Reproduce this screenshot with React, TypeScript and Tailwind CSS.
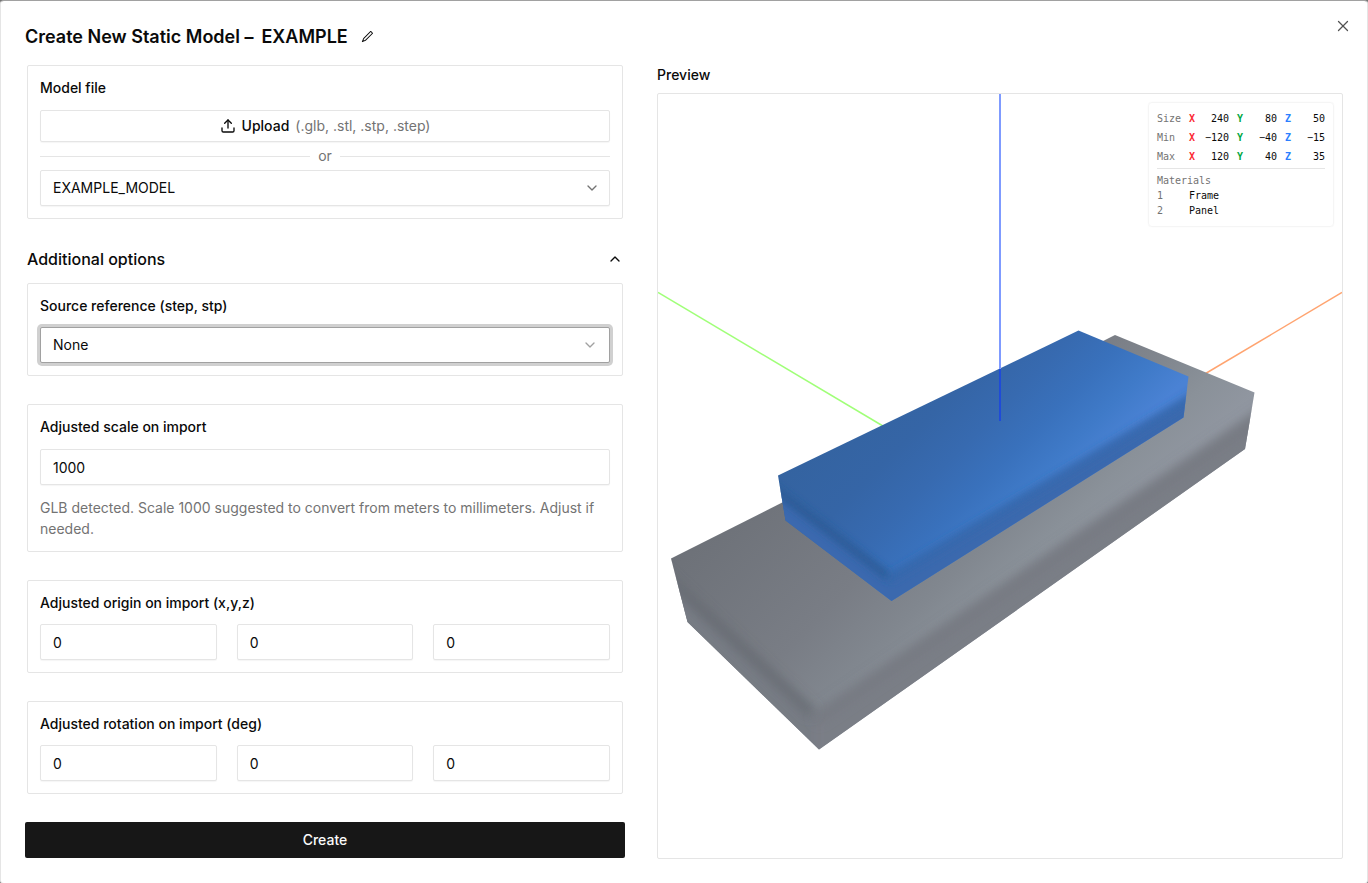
import React, { useState } from "react";
import { ChevronDown, ChevronUp, Upload, X } from "lucide-react";
import { RxPencil1 } from "react-icons/rx";

interface Bounds {
	label: string;
	x: string;
	y: string;
	z: string;
}

const BOUNDS: Bounds[] = [
	{ label: "Size", x: "240", y: "80", z: "50" },
	{ label: "Min", x: "−120", y: "−40", z: "−15" },
	{ label: "Max", x: "120", y: "40", z: "35" },
];

const MATERIALS = ["Frame", "Panel"];
const AXES = ["x", "y", "z"];

const fieldClass =
	"h-9 w-full rounded-xs border border-neutral-200 bg-white px-3 text-sm text-neutral-950 shadow-[0_1px_1px_rgba(0,0,0,0.04)] outline-none";

const Card = ({ children }: { children: React.ReactNode }) => (
	<section className="rounded-xs border border-neutral-200 p-3">
		{children}
	</section>
);

const VectorCard = ({ title, name }: { title: string; name: string }) => {
	const [values, setValues] = useState(["0", "0", "0"]);

	return (
		<Card>
			<fieldset>
				<legend className="text-sm leading-5 font-medium">{title}</legend>
				<div className="mt-[11px] grid grid-cols-3 gap-5">
					{AXES.map((axis, i) => (
						<input
							key={axis}
							aria-label={`${name} ${axis}`}
							className={fieldClass}
							value={values[i]}
							onChange={(e) =>
								setValues(values.map((v, j) => (j === i ? e.target.value : v)))
							}
						/>
					))}
				</div>
			</fieldset>
		</Card>
	);
};

const AxisValue = ({
	axis,
	value,
	color,
}: {
	axis: string;
	value: string;
	color: string;
}) => (
	<td className="pb-1 pl-2">
		<div className="flex w-10 justify-between">
			<span className={`font-bold ${color}`}>{axis}</span>
			<span>{value}</span>
		</div>
	</td>
);

const ModelInfo = () => (
	<div className="absolute top-2 right-2 rounded-sm border border-neutral-100 bg-white/90 p-2 font-['DejaVu_Sans_Mono',monospace] text-[10px] leading-[15px] shadow-[0_0_1px_rgba(0,0,0,0.08)]">
		<table className="border-collapse">
			<tbody>
				{BOUNDS.map((b) => (
					<tr key={b.label}>
						<th
							scope="row"
							className="w-6 pb-1 text-left font-normal text-neutral-500"
						>
							{b.label}
						</th>
						<AxisValue axis="X" value={b.x} color="text-red-500" />
						<AxisValue axis="Y" value={b.y} color="text-green-600" />
						<AxisValue axis="Z" value={b.z} color="text-blue-500" />
					</tr>
				))}
			</tbody>
		</table>
		<div className="border-t border-neutral-200 pt-1">
			<div className="text-neutral-500">Materials</div>
			<ol>
				{MATERIALS.map((name, i) => (
					<li key={name} className="flex">
						<span className="w-8 text-neutral-500">{i + 1}</span>
						<span>{name}</span>
					</li>
				))}
			</ol>
		</div>
	</div>
);

const ModelScene = () => (
	<svg
		className="h-0 w-full flex-1"
		viewBox="0 0 684 764"
		preserveAspectRatio="xMidYMid slice"
		role="img"
		aria-label="Model preview"
	>
		<defs>
			<linearGradient id="frameTop" gradientUnits="userSpaceOnUse" x1="238" y1="238" x2="448" y2="448">
				<stop offset="0" stopColor="#6d7178" />
				<stop offset="0.5" stopColor="#797d85" />
				<stop offset="0.71" stopColor="#81878f" />
				<stop offset="0.86" stopColor="#8a9199" />
				<stop offset="1" stopColor="#9096a0" />
			</linearGradient>
			<linearGradient id="panelTop" gradientUnits="userSpaceOnUse" x1="251" y1="251" x2="406" y2="406">
				<stop offset="0" stopColor="#3463a0" />
				<stop offset="0.3" stopColor="#3565a6" />
				<stop offset="0.5" stopColor="#376ab0" />
				<stop offset="0.68" stopColor="#3971bc" />
				<stop offset="0.84" stopColor="#3f7ac8" />
				<stop offset="1" stopColor="#4a82d4" />
			</linearGradient>
			<clipPath id="frameClip">
				<path d="M13 464.5 457 241l139.500 57.500L587 355 161 655.500 29.500 528Z" />
			</clipPath>
			<clipPath id="panelClip">
				<path d="M120 381.500 420.500 236.500l110 46-5 41L233.500 507l-106-80.500Z" />
			</clipPath>
			<filter id="blurWide" x="-20%" y="-20%" width="140%" height="140%">
				<feGaussianBlur stdDeviation="6" />
			</filter>
			<filter id="blurNarrow" x="-20%" y="-20%" width="140%" height="140%">
				<feGaussianBlur stdDeviation="4" />
			</filter>
		</defs>

		<path d="M0 198.500 230 335" stroke="#a0ff78" strokeWidth="1.500" />
		<path d="M684 198.500 540 284" stroke="#ffa470" strokeWidth="1.500" />

		<g clipPath="url(#frameClip)">
			<rect width="684" height="764" fill="url(#frameTop)" />
			<g filter="url(#blurWide)">
				<path d="M-20 456 155 620l6 90L-20 560Z" fill="#777b84" />
				<path d="M155 620 640 290v120L161 720Z" fill="#7a7e86" />
			</g>
			<path d="M-10 466 155 620" stroke="#63676e" strokeWidth="8" filter="url(#blurWide)" />
			<path d="M158 626 640 298" stroke="#747880" strokeWidth="8" filter="url(#blurWide)" />
		</g>

		<g clipPath="url(#panelClip)">
			<rect width="684" height="764" fill="url(#panelTop)" />
			<g filter="url(#blurNarrow)">
				<path d="M90 376 231 483l4 60L90 440Z" fill="#3a69af" />
				<path d="M231 483 570 280v80L233 540Z" fill="#3b69ae" />
			</g>
			<path d="M100 383 231 483" stroke="#28568f" strokeWidth="6" filter="url(#blurNarrow)" />
			<path d="M231 485 570 282" stroke="#3365a8" strokeWidth="5" filter="url(#blurNarrow)" />
		</g>

		<path d="M342 0V275" stroke="#7f9bff" strokeWidth="2" />
		<path d="M342 275V327" stroke="#1f4bd8" strokeWidth="2" />
	</svg>
);

const App: React.FC = () => {
	const [model, setModel] = useState("EXAMPLE_MODEL");
	const [source, setSource] = useState("None");
	const [scale, setScale] = useState("1000");
	const [open, setOpen] = useState(true);

	return (
		<div className="flex min-h-screen bg-neutral-500 font-[Inter,sans-serif] text-neutral-950">
			<div
				role="dialog"
				aria-labelledby="title"
				className="relative flex flex-1 flex-col gap-4 rounded border border-neutral-200 border-t-neutral-400 bg-white p-6"
			>
				<header className="flex h-6 items-center">
					<h1 id="title" className="text-lg leading-6 font-semibold">
						Create New Static Model –
						<span className="ml-2">EXAMPLE</span>
					</h1>
					<button type="button" aria-label="Rename" className="ml-3">
						<RxPencil1 className="size-3.5" />
					</button>
				</header>

				<button
					type="button"
					aria-label="Close"
					className="absolute top-4 right-[15px] opacity-70"
				>
					<X className="size-[18px]" strokeWidth={1.75} />
				</button>

				<div className="flex flex-1 gap-8">
					<form
						className="flex w-[600px] shrink-0 flex-col gap-7"
						onSubmit={(e) => e.preventDefault()}
					>
						<div className="flex flex-col gap-7 px-0.5">
							<Card>
								<h2 className="text-sm leading-5 font-medium">Model file</h2>
								<button
									type="button"
									className="mt-3 flex h-8 w-full items-center justify-center gap-1.5 rounded-xs border border-neutral-200 text-sm font-medium shadow-[0_1px_1px_rgba(0,0,0,0.04)]"
								>
									<Upload className="size-4" />
									Upload
									<span className="font-normal text-neutral-500">
										(.glb, .stl, .stp, .step)
									</span>
								</button>
								<div className="flex h-7 items-center gap-2 text-sm text-neutral-500">
									<div className="h-px flex-1 bg-neutral-200" />
									or
									<div className="h-px flex-1 bg-neutral-200" />
								</div>
								<div className="relative">
									<select
										aria-label="Model"
										className={`appearance-none ${fieldClass}`}
										value={model}
										onChange={(e) => setModel(e.target.value)}
									>
										<option>EXAMPLE_MODEL</option>
									</select>
									<ChevronDown className="pointer-events-none absolute top-2.5 right-2.5 size-4 text-neutral-500" />
								</div>
							</Card>

							<div className="flex flex-col gap-3">
								<button
									type="button"
									aria-expanded={open}
									className="flex items-center justify-between text-base font-medium"
									onClick={() => setOpen(!open)}
								>
									Additional options
									<ChevronUp className="size-4" />
								</button>
								{open && (
									<div className="flex flex-col gap-7">
										<Card>
											<label
												htmlFor="source"
												className="block text-sm leading-5 font-medium"
											>
												Source reference (step, stp)
											</label>
											<div className="relative mt-[11px]">
												<select
													id="source"
													className="h-9 w-full appearance-none rounded-xs border border-neutral-400 bg-white px-3 text-sm ring-3 ring-neutral-400/50 outline-none"
													value={source}
													onChange={(e) => setSource(e.target.value)}
												>
													<option>None</option>
												</select>
												<ChevronDown className="pointer-events-none absolute top-2.5 right-3 size-4 text-neutral-400" />
											</div>
										</Card>

										<Card>
											<label
												htmlFor="scale"
												className="block text-sm leading-5 font-medium"
											>
												Adjusted scale on import
											</label>
											<input
												id="scale"
												className={`mt-3 block ${fieldClass}`}
												value={scale}
												onChange={(e) => setScale(e.target.value)}
											/>
											<p className="mt-3 text-sm leading-[21px] text-neutral-500">
												GLB detected. Scale 1000 suggested to convert from meters
												to millimeters. Adjust if needed.
											</p>
										</Card>

										<VectorCard
											title="Adjusted origin on import (x,y,z)"
											name="Origin"
										/>
										<VectorCard
											title="Adjusted rotation on import (deg)"
											name="Rotation"
										/>
									</div>
								)}
							</div>
						</div>
						<button
							type="submit"
							className="h-9 rounded-xs bg-neutral-900 text-sm font-medium text-neutral-50"
						>
							Create
						</button>
					</form>

					<section className="flex flex-1 flex-col gap-2">
						<h2 className="text-sm leading-5 font-medium">Preview</h2>
						<div className="relative flex flex-1 flex-col overflow-hidden rounded-xs border border-neutral-200">
							<ModelScene />
							<ModelInfo />
						</div>
					</section>
				</div>
			</div>
		</div>
	);
};

export default App;
